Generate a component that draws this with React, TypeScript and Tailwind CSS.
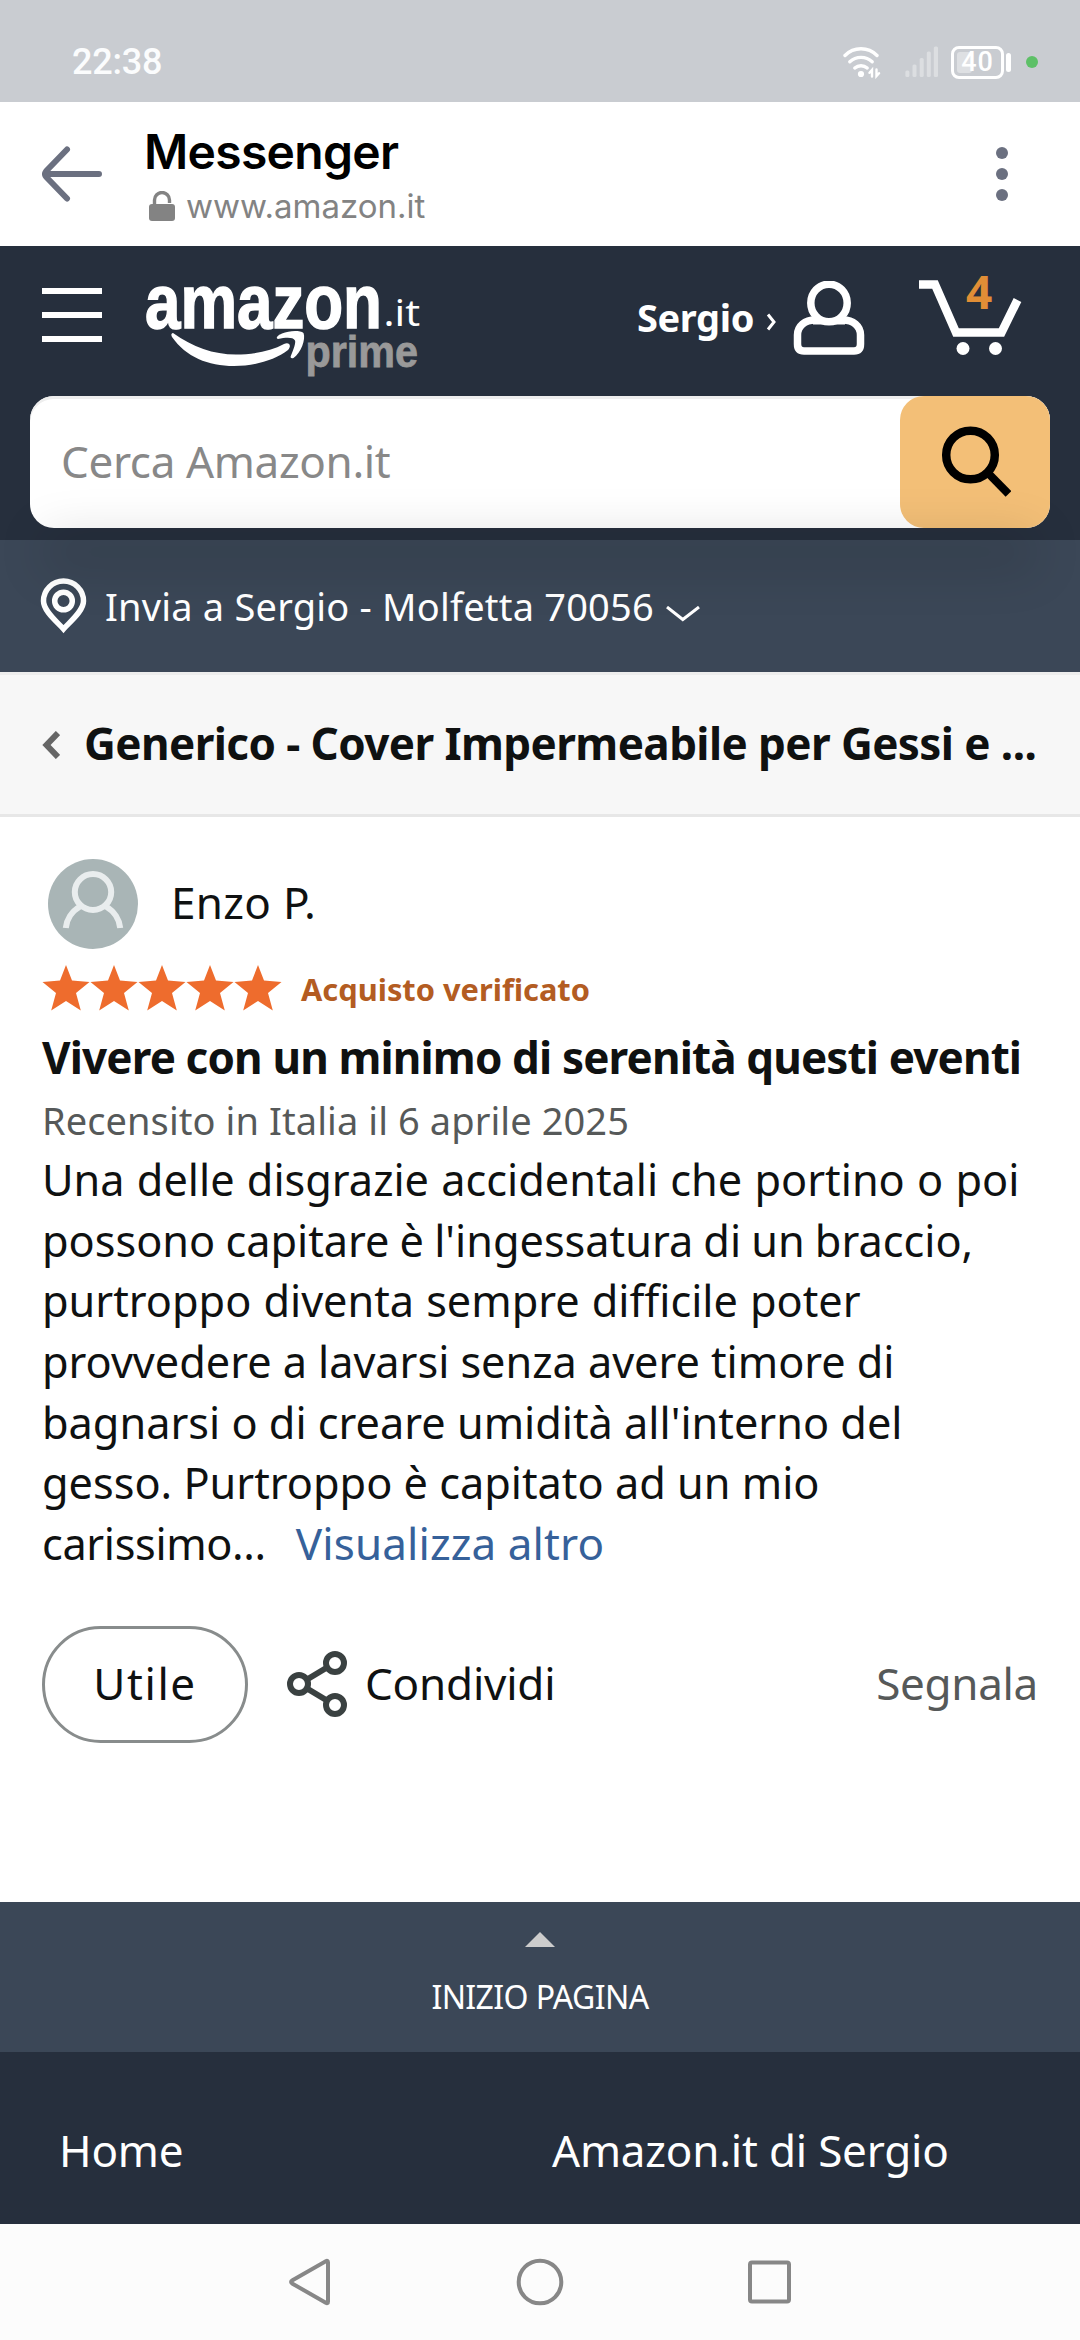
const reviewLines = [
  { text: "Una delle disgrazie accidentali che portino o poi", spacing: "[word-spacing:1px]" },
  { text: "possono capitare è l'ingessatura di un braccio,", spacing: "[word-spacing:-1.1px]" },
  { text: "purtroppo diventa sempre difficile poter", spacing: "[word-spacing:0.8px]" },
  { text: "provvedere a lavarsi senza avere timore di", spacing: "[word-spacing:-0.2px]" },
  { text: "bagnarsi o di creare umidità all'interno del", spacing: "[word-spacing:0px]" },
  { text: "gesso. Purtroppo è capitato ad un mio", spacing: "[word-spacing:0px]" },
];

const StatusBar = () => (
  <div className="flex h-[102px] items-center justify-between bg-[#c9ccd1] pt-[22px] pr-[42px] pl-[72px]">
    <span className="font-[Roboto,sans-serif] text-[36px] leading-none font-medium tracking-[-0.2px] text-[#fbfcfd]">
      22:38
    </span>
    <div className="flex items-center">
      {/* wifi */}
      <svg width="38" height="34" viewBox="0 0 38 34" fill="none" stroke="#fff" strokeWidth="3.4" strokeLinecap="round">
        <path d="M2 10.5 A22.5 22.5 0 0 1 34 10.5" />
        <path d="M6.8 16.8 A16.5 16.5 0 0 1 29.2 16.8" />
        <path d="M11.8 23 A9.5 9.5 0 0 1 24.2 23" />
        <circle cx="18" cy="29" r="3.1" fill="#fff" stroke="none" />
        <path d="M29 31.5 V25 L26.5 27.8 M33.5 24.5 V31 L36 28.2" strokeWidth="2.4" />
      </svg>
      <svg className="ml-6" width="34" height="34" viewBox="0 0 34 34" fill="#dcdee1">
        <rect x="0.4" y="25.5" width="4" height="6.5" rx="1.5" />
        <rect x="7.5" y="19.5" width="4" height="12.5" rx="1.5" />
        <rect x="14.7" y="13" width="4" height="19" rx="1.5" />
        <rect x="21.8" y="6.5" width="4" height="25.5" rx="1.5" />
        <rect x="28.8" y="1.5" width="4.2" height="30.5" rx="1.5" />
      </svg>
      <div className="relative ml-3 flex h-[33px] w-[53px] items-center justify-center rounded-[8px] border-[3px] border-white">
        <span className="absolute top-[3px] left-[3px] h-[21px] w-[15px] rounded-[3px] bg-[#dee0e3]" />
        <span className="relative font-[Roboto,sans-serif] text-[27px] leading-none font-medium tracking-[1px] text-white">40</span>
      </div>
      <span className="ml-0.5 h-[19px] w-[5px] rounded-full bg-white" />
      <span className="ml-[15px] h-3 w-3 rounded-full bg-[#5dc067]" />
    </div>
  </div>
);

const BrowserBar = () => (
  <div className="flex h-[144px] items-center bg-white pr-[72px] pl-[42px]">
    <svg width="60" height="56" viewBox="0 0 60 56" fill="none" stroke="#6b7080" strokeWidth="6" strokeLinecap="round" strokeLinejoin="round">
      <path d="M57 28 H4 M25 3.500 L4.200 25 Q1.800 28 4.200 31 L25 52.500" />
    </svg>
    <div className="ml-[42px] flex flex-1 flex-col font-[Inter,sans-serif]">
      <h1 className="mt-[5px] h-[59px] text-[48px] leading-[60px] font-semibold tracking-[-0.7px] text-black">Messenger</h1>
      <div className="flex h-[50px] items-center text-[#838383]">
        <svg className="ml-[5px]" width="26" height="30" viewBox="0 0 26 30">
          <path d="M5.500 14 V9 A7.500 7.500 0 0 1 20.500 9 V12" fill="none" stroke="#838383" strokeWidth="3.400" />
          <rect x="0" y="13" width="26" height="17" rx="3" fill="#838383" />
        </svg>
        <span className="ml-[11px] text-[33px] leading-[50px]">www.amazon.it</span>
      </div>
    </div>
    <div className="flex flex-col gap-[9px]">
      <span className="h-3 w-3 rounded-full bg-[#6b7080]" />
      <span className="h-3 w-3 rounded-full bg-[#6b7080]" />
      <span className="h-3 w-3 rounded-full bg-[#6b7080]" />
    </div>
  </div>
);

const Logo = () => (
  <svg className="ml-[42px] overflow-visible" width="280" height="138" viewBox="0 0 280 138" fill="#fff">
    <text x="1" y="81.500" fontFamily="Liberation Sans, sans-serif" fontWeight="700" fontSize="76" textLength="237" lengthAdjust="spacingAndGlyphs" stroke="#fff" strokeWidth="1.500">
      amazon
    </text>
    <text x="239.500" y="80" fontFamily="Noto Sans, sans-serif" fontSize="37" textLength="36.500" lengthAdjust="spacingAndGlyphs">
      .it
    </text>
    <text x="161.500" y="120.500" fontFamily="Liberation Sans, sans-serif" fontWeight="700" fontSize="45" fill="#999" stroke="#999" strokeWidth="0.800" textLength="112.500" lengthAdjust="spacingAndGlyphs">
      prime
    </text>
    <path d="M29 87 C27 87.500 27 89 28 91 C42 111 64 120 90 120 C111 120 131 114 144 104 C148 99 145 96 140 98 C127 105 109 108.500 92 108.500 C69 108.500 49 101 29 87 Z" />
    <path d="M134 93 C131 92 134 89 138 87.500 C145 84.500 156 84 159.500 87 C162 93 157 107 149.500 112 C147 113 146 111.500 147 109.500 C149.500 103.500 152 97 151 94.500 C149 91 142 91.500 134 93 Z" />
  </svg>
);

const Header = () => (
  <header className="relative h-[294px] bg-[#262f3d] px-[30px]">
    <div className="flex h-[150px] items-start">
      <div className="mt-[42px] ml-3 flex w-[60px] flex-col gap-[18px]">
        <span className="h-1.5 bg-white" />
        <span className="h-1.5 bg-white" />
        <span className="h-1.5 bg-white" />
      </div>
      <Logo />
      <div className="ml-auto flex h-[138px] items-center pr-[25px]">
        <span className="mt-1 text-[38px] font-bold tracking-[-0.4px] whitespace-pre text-white">Sergio</span>
        <svg className="mt-[13px] ml-[12px]" width="11" height="18" viewBox="0 0 11 18" fill="none" stroke="#fff" strokeWidth="3">
          <path d="M2 1.500 L8 9 L2 16.500" />
        </svg>
        <svg className="mt-[6px] ml-[16px]" width="72" height="74" viewBox="0 0 72 74" fill="none" stroke="#fff" strokeWidth="7.500">
          <ellipse cx="36" cy="22" rx="18.200" ry="18.800" />
          <path d="M22 39 C12 39 4.500 45 4.500 54 V63 Q4.500 70 11 70 H61 Q67.500 70 67.500 63 V54 C67.500 45 60 39 50 39" />
          <path d="M20 40.500 H52" strokeWidth="6" />
        </svg>
        <div className="relative mt-[4px] ml-[54px]">
          <svg width="106" height="78" viewBox="0 0 106 78">
            <path d="M0 6.500 H16 L37 54.500 H82.500 L98.500 22" fill="none" stroke="#fff" strokeWidth="8.500" />
            <circle cx="44" cy="70.500" r="6.500" fill="#fff" />
            <circle cx="76.500" cy="70.500" r="6.500" fill="#fff" />
          </svg>
          <span className="absolute -top-[13px] left-[47px] text-[46px] leading-[52px] font-bold text-[#e18e36]">4</span>
        </div>
      </div>
    </div>
    <div className="flex h-[132px] rounded-[24px] bg-white shadow-[inset_0_3px_0_#eee]">
      <div className="flex flex-1 items-center pb-[3px] pl-[31px] text-[44px] tracking-[-0.35px] text-[#888]">Cerca Amazon.it</div>
      <button className="flex w-[150px] items-center justify-center rounded-[24px] bg-[#f3bf77]">
        <svg width="72" height="74" viewBox="0 0 72 74" fill="none" stroke="#000">
          <circle cx="31.500" cy="30" r="24.300" strokeWidth="8.500" />
          <path d="M48.500 47.500 L69.500 69" strokeWidth="8" />
        </svg>
      </button>
    </div>
    {/* soft shadow across the seam with the address bar */}
    <div className="absolute top-[306px] right-[60px] left-[60px] z-10 h-0 shadow-[0_0_50px_16px_rgba(0,0,0,0.15)]" />
  </header>
);

const AddressBar = () => (
  <div className="flex h-[132px] items-center bg-[#3b4757] pl-10 text-white">
    <svg width="48" height="56" viewBox="0 0 48 56" fill="none" stroke="#fff">
      <path d="M23.500 51 C18 44.500 3.500 33.500 3.500 23 A20 20 0 0 1 43.500 23 C43.500 33.500 29 44.500 23.500 51 Z" strokeWidth="5.500" />
      <circle cx="23.500" cy="23" r="8.800" strokeWidth="5.500" />
    </svg>
    <span className="ml-[17px] text-[38px] leading-none tracking-[0.2px]">Invia a Sergio - Molfetta 70056</span>
    <svg className="mt-4 ml-3" width="34" height="16" viewBox="0 0 34 16" fill="none" stroke="#fff" strokeWidth="3">
      <path d="M1 1 L16.800 13.500 L33 1" />
    </svg>
  </div>
);

const ProductTitle = () => (
  <div className="flex h-[145px] items-center border-y-[3px] border-t-[#ededed] border-b-[#e7e7e7] bg-[#f7f7f7] pl-[42px]">
    <svg width="18" height="28" viewBox="0 0 18 28" fill="none" stroke="#666" strokeWidth="6">
      <path d="M16 2 L4.500 14 L16 26" />
    </svg>
    <h2 className="-mt-[3px] ml-[24px] text-[44px] font-bold tracking-[-0.58px] whitespace-nowrap text-[#0f1111]">
      Generico - Cover Impermeabile per Gessi e ...
    </h2>
  </div>
);

const Star = () => (
  <svg width="48" height="46" viewBox="0 0 48 46" fill="#ee6c2d">
    <path d="M24 0 L30 15.500 L47.500 17 L34 28 L38.800 45.500 L24 36 L9.200 45.500 L14 28 L0.500 17 L18 15.500 Z" />
  </svg>
);

const Review = () => (
  <main className="h-[1085px] bg-white px-[42px] pt-[42px] text-[#0f1111]">
    <div className="flex h-[90px] items-center pl-1.5">
      <svg width="90" height="90" viewBox="0 0 90 90">
        <circle cx="45" cy="45" r="45" fill="#a9b5b6" />
        <g fill="none" stroke="#e9edee" strokeWidth="6">
          <ellipse cx="45" cy="33" rx="18.200" ry="18" />
          <path d="M17.800 69 C18.500 61 23.500 52.500 32 47.500 M72.200 69 C71.500 61 66.500 52.500 58 47.500" />
        </g>
      </svg>
      <span className="-mt-[5px] ml-[33px] text-[44px] tracking-[0.3px]">Enzo P.</span>
    </div>
    <div className="flex h-[79px] items-center">
      <div className="-mt-[2px] flex">
        {[1, 2, 3, 4, 5].map((n) => (
          <Star key={n} />
        ))}
      </div>
      <span className="mt-[1px] ml-[19px] text-[30.8px] font-bold text-[#b35c22]">Acquisto verificato</span>
    </div>
    <h3 className="text-[44px] leading-[58px] font-bold tracking-[-0.86px] whitespace-nowrap">
      Vivere con un minimo di serenità questi eventi
    </h3>
    <p className="h-[64px] pt-[5px] text-[38px] leading-[58px] tracking-[0.08px] text-[#565959]">
      Recensito in Italia il 6 aprile 2025
    </p>
    <div className="text-[43.25px] leading-[60.67px] whitespace-nowrap">
      {reviewLines.map((line) => (
        <p key={line.text} className={line.spacing}>
          {line.text}
        </p>
      ))}
      <p>
        <span className="tracking-[-0.35px]">carissimo...</span>
        <a className="ml-[30px] text-[44px] leading-none tracking-[0.1px] text-[#36619a]">Visualizza altro</a>
      </p>
    </div>
    <div className="mt-[51px] flex h-[117px] items-center text-[44px]">
      <button className="h-[117px] w-[206px] rounded-full border-[3px] border-[#888c8c] pb-[3px] tracking-[1.6px]">
        Utile
      </button>
      <svg className="ml-[39px]" width="60" height="66" viewBox="0 0 60 66" fill="none" stroke="#3a4141" strokeWidth="6">
        <circle cx="12" cy="33" r="9" />
        <circle cx="48" cy="12" r="9" />
        <circle cx="48" cy="54" r="9" />
        <path d="M20 28.500 L40 16.500 M20 37.500 L40 49.500" />
      </svg>
      <span className="-mt-[3px] ml-[18px] tracking-[-0.2px]">Condividi</span>
      <span className="-mt-[3px] ml-auto tracking-[-0.3px] text-[#565959]">Segnala</span>
    </div>
  </main>
);

const Footer = () => (
  <footer className="text-white">
    <div className="flex h-[150px] flex-col items-center bg-[#3b4757] pt-[30px]">
      <svg width="30" height="15" viewBox="0 0 30 15" fill="#ccc">
        <path d="M15 0 L30 15 H0 Z" />
      </svg>
      <span className="mt-[26px] text-[32px] leading-[48px] tracking-[-0.6px]">INIZIO PAGINA</span>
    </div>
    <div className="flex h-[172px] items-center bg-[#262f3d] pt-6 pl-[59px] text-[44px] tracking-[-0.2px]">
      <span className="w-[493px]">Home</span>
      <span>Amazon.it di Sergio</span>
    </div>
  </footer>
);

const NavBar = () => (
  <nav className="flex h-[116px] items-center justify-center gap-[182px] bg-[#fcfcfc]">
    <svg width="48" height="48" viewBox="0 0 48 48" fill="none" stroke="#878787" strokeWidth="4" strokeLinejoin="round">
      <path d="M42 4.500 Q42 2 39.800 3.200 L6.500 22.300 Q3.600 24 6.500 25.700 L39.800 44.800 Q42 46 42 43.500 Z" />
    </svg>
    <svg width="48" height="48" viewBox="0 0 48 48" fill="none" stroke="#878787" strokeWidth="4">
      <circle cx="24" cy="24" r="21.300" />
    </svg>
    <svg width="48" height="48" viewBox="0 0 48 48" fill="none" stroke="#878787" strokeWidth="4">
      <rect x="4" y="4.500" width="39" height="39" rx="2" />
    </svg>
  </nav>
);

const App = () => {
  return (
    <div className="flex h-[2340px] w-[1080px] flex-col overflow-hidden bg-white font-['Noto_Sans',sans-serif]">
      <StatusBar />
      <BrowserBar />
      <Header />
      <AddressBar />
      <ProductTitle />
      <Review />
      <Footer />
      <NavBar />
    </div>
  );
};

export default App;
